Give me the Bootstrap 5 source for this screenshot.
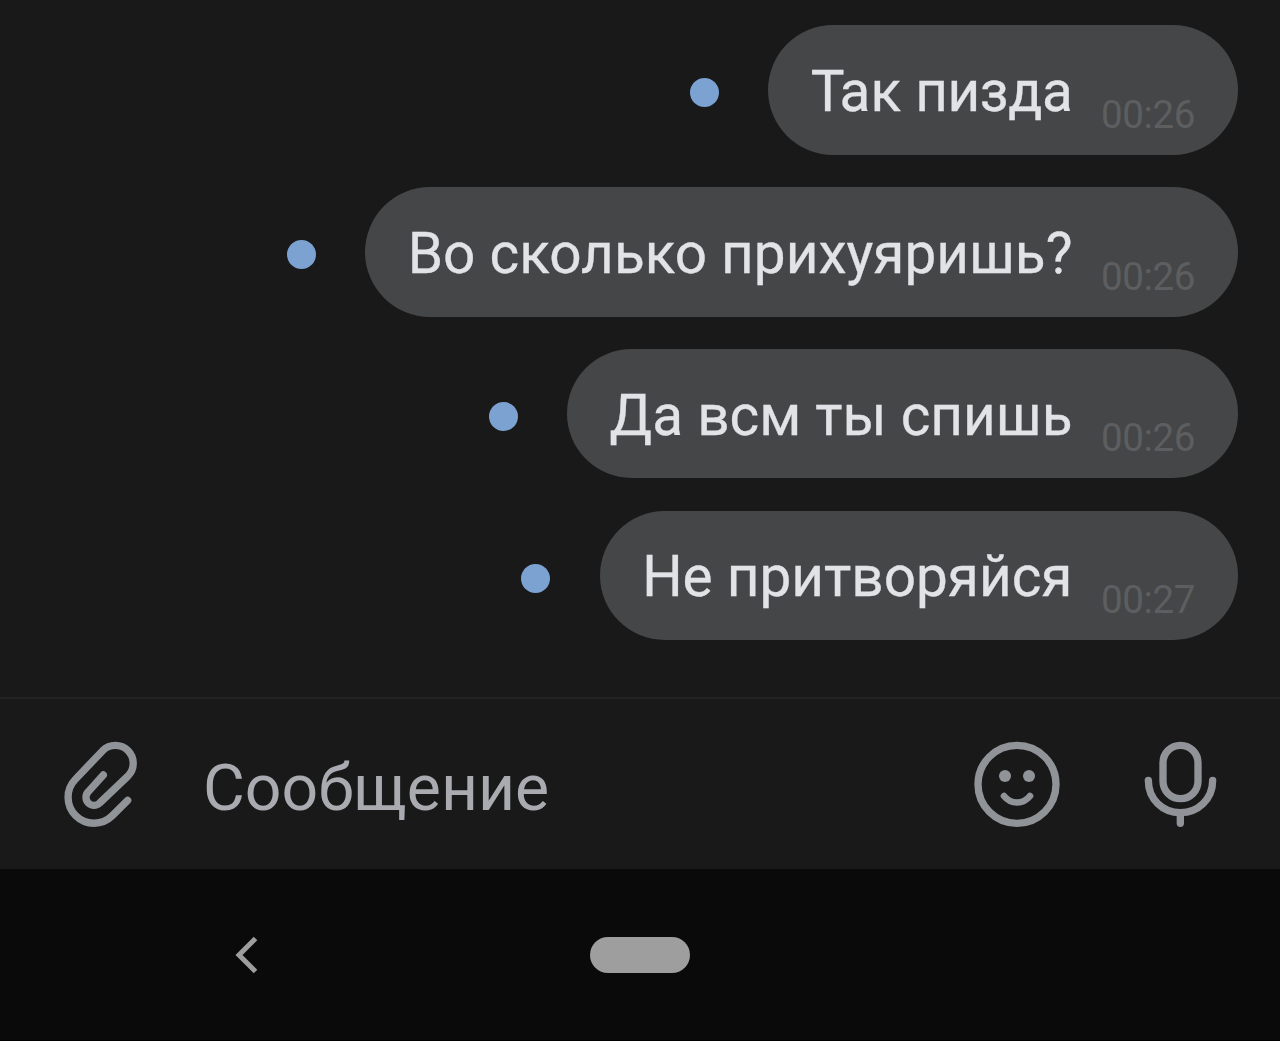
<!DOCTYPE html>
<html lang="ru">
<head>
    <meta charset="UTF-8">
    <meta name="viewport" content="width=device-width, initial-scale=1.0">
    <title>Сообщения</title>
    <link href="https://cdn.jsdelivr.net/npm/bootstrap@5.3.2/dist/css/bootstrap.min.css" rel="stylesheet">
    <style>
        body {
            background-color: #191919;
            font-family: Roboto, "Liberation Sans", sans-serif;
            overflow: hidden;
        }
        .chat-list {
            padding: 25.3px 42.5px 0 0;
            gap: 32.3px;
        }
        .msg-row {
            gap: 49.5px;
        }
        .unread-dot {
            width: 29px;
            height: 29px;
            margin-top: 5.5px;
            background-color: #7ba2d0;
        }
        .bubble {
            height: 129.5px;
            padding: 0 42.5px;
            gap: 28.5px;
            border-radius: 65px;
            background-color: #454647;
        }
        .msg-text {
            padding-top: 4px;
            font-size: 56.7px;
            line-height: 68px;
            color: #e1e3e6;
            -webkit-text-stroke: 0.3px #e1e3e6;
        }
        /* пара «Та» ставится плотнее */
        .kern-t {
            letter-spacing: -5px;
        }
        .kern-word {
            letter-spacing: -0.4px;
        }
        .msg-time {
            margin-bottom: 20px;
            font-size: 38.6px;
            line-height: 40px;
            letter-spacing: -0.4px;
            color: #5d5e60;
        }
        .composer {
            height: 172px;
            border-top: 2px solid #232323;
            padding: 0 40px;
        }
        .composer-input {
            margin-left: 43px;
            padding-top: 8px;
            font-size: 64.3px;
            line-height: 76px;
            color: #a9abb0;
        }
        .composer-icon {
            width: 120px;
            height: 130px;
            margin-top: 2px;
            fill: none;
            stroke: #909499;
            stroke-width: 22;
            stroke-linecap: round;
            stroke-linejoin: round;
        }
        .icon-mic {
            margin-left: 40px;
        }
        .nav-keys {
            height: 172px;
            background-color: #0a0a0a;
            border-bottom: 1px solid #000;
        }
        .home-pill {
            width: 100px;
            height: 36px;
            background-color: #9e9e9e;
        }
        .key-side {
            flex: 1 1 0;
        }
        .key-back {
            margin-left: 230px;
        }
    </style>
</head>
<body class="vh-100 d-flex flex-column">
    <!-- Сообщения -->
    <main class="chat-list flex-grow-1 d-flex flex-column align-items-end">
        <div class="msg-row d-flex align-items-center">
            <span class="unread-dot rounded-circle"></span>
            <div class="bubble d-flex align-items-center text-nowrap">
                <span class="msg-text"><span class="kern-t">Т</span>ак <span class="kern-word">пизда</span></span>
                <span class="msg-time align-self-end">00:26</span>
            </div>
        </div>
        <div class="msg-row d-flex align-items-center">
            <span class="unread-dot rounded-circle"></span>
            <div class="bubble d-flex align-items-center text-nowrap">
                <span class="msg-text">Во сколько прихуяришь?</span>
                <span class="msg-time align-self-end">00:26</span>
            </div>
        </div>
        <div class="msg-row d-flex align-items-center">
            <span class="unread-dot rounded-circle"></span>
            <div class="bubble d-flex align-items-center text-nowrap">
                <span class="msg-text">Да всм ты спишь</span>
                <span class="msg-time align-self-end">00:26</span>
            </div>
        </div>
        <div class="msg-row d-flex align-items-center">
            <span class="unread-dot rounded-circle"></span>
            <div class="bubble d-flex align-items-center text-nowrap">
                <span class="msg-text">Не притворяйся</span>
                <span class="msg-time align-self-end">00:27</span>
            </div>
        </div>
    </main>

    <!-- Поле ввода -->
    <div class="composer d-flex align-items-center flex-shrink-0">
        <svg class="composer-icon" viewBox="0 0 360 390">
            <path d="M263 241L217 287A77 77 0 0 1 107 177L188 92A53 53 0 0 1 264 168L179 249A24 24 0 0 1 145 215L190 165"/>
        </svg>
        <span class="composer-input flex-grow-1">Сообщение</span>
        <svg class="composer-icon" viewBox="0 0 360 390">
            <circle cx="171" cy="193" r="117"/>
            <circle cx="135" cy="168" r="18" fill="#909499" stroke="none"/>
            <circle cx="207" cy="168" r="18" fill="#909499" stroke="none"/>
            <path d="M132 228C153 254 189 254 210 228" stroke-width="20"/>
        </svg>
        <svg class="composer-icon icon-mic" viewBox="0 0 360 390">
            <rect x="129" y="76" width="105" height="160" rx="52.5"/>
            <path d="M85 181C85 238 128 278 181 278S278 238 278 181M181 278V310"/>
        </svg>
    </div>

    <!-- Системные кнопки -->
    <div class="nav-keys d-flex align-items-center flex-shrink-0">
        <div class="key-side">
            <svg class="key-back d-block" width="32" height="44" viewBox="0 0 32 44" fill="none" stroke="#9e9e9e" stroke-width="5">
                <path d="M25.5 5.5L9 22L25.5 38.5"/>
            </svg>
        </div>
        <div class="home-pill rounded-pill"></div>
        <div class="key-side"></div>
    </div>

    <script src="https://cdn.jsdelivr.net/npm/bootstrap@5.3.2/dist/js/bootstrap.bundle.min.js"></script>
</body>
</html>
